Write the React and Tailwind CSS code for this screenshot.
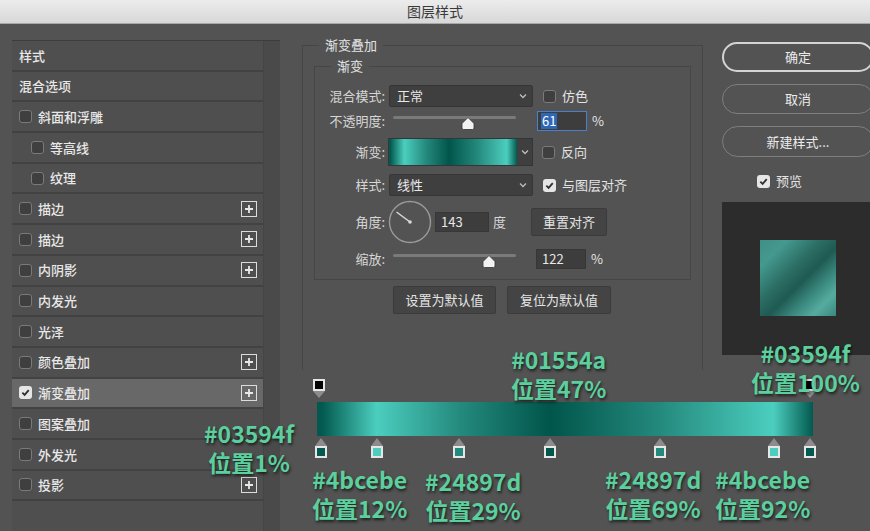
import React from 'react';

const layers = [
  { label: '样式' },
  { label: '混合选项' },
  { label: '斜面和浮雕', box: true },
  { label: '等高线', box: true, indent: true },
  { label: '纹理', box: true, indent: true },
  { label: '描边', box: true, plus: true },
  { label: '描边', box: true, plus: true },
  { label: '内阴影', box: true, plus: true },
  { label: '内发光', box: true },
  { label: '光泽', box: true },
  { label: '颜色叠加', box: true, plus: true },
  { label: '渐变叠加', box: true, plus: true, checked: true, active: true },
  { label: '图案叠加', box: true },
  { label: '外发光', box: true },
  { label: '投影', box: true, plus: true },
];

const grad =
  'linear-gradient(90deg, #03594f 1%, #4bcebe 12%, #24897d 29%, #01554a 47%, #24897d 69%, #4bcebe 92%, #03594f 100%)';

function Check({ checked }) {
  if (checked) {
    return (
      <span className="w-[13px] h-[13px] rounded-[3px] bg-[#e6e6e6] flex items-center justify-center shrink-0">
        <svg width="9" height="9" viewBox="0 0 10 10">
          <path d="M1.5 5.2 L4 7.6 L8.6 2.4" fill="none" stroke="#2f2f2f" strokeWidth="2" />
        </svg>
      </span>
    );
  }
  return <span className="w-[13px] h-[13px] rounded-[3px] border border-[#7a7a7a] bg-[#3f3f3f] shrink-0" />;
}

function Plus() {
  return (
    <span className="w-[16px] h-[16px] border-[1.5px] border-[#dcdcdc] flex items-center justify-center">
      <svg width="10" height="10" viewBox="0 0 10 10">
        <path d="M5 1 V9 M1 5 H9" stroke="#e8e8e8" strokeWidth="1.8" />
      </svg>
    </span>
  );
}

function Chevron() {
  return (
    <svg width="8" height="6" viewBox="0 0 8 6">
      <path d="M1 1.5 L4 4.5 L7 1.5" fill="none" stroke="#bdbdbd" strokeWidth="1.3" />
    </svg>
  );
}

function Select({ value }) {
  return (
    <div className="w-[144px] h-[22px] bg-[#3f3f3f] border border-[#363636] rounded-[2px] flex items-center justify-between pl-[7px] pr-[5px] text-[#e8e8e8]">
      <span>{value}</span>
      <Chevron />
    </div>
  );
}

function Thumb() {
  return (
    <svg width="14" height="13" viewBox="0 0 14 13">
      <path d="M7 0.5 L13 6.5 V11 Q13 12.5 11.5 12.5 H2.5 Q1 12.5 1 11 V6.5 Z" fill="#f2f2f2" stroke="#333" strokeWidth="0.8" />
    </svg>
  );
}

function Slider({ at }) {
  return (
    <div className="relative w-[123px] h-[20px] ml-[7px]">
      <div className="absolute left-0 right-0 top-[5px] h-[3px] bg-[#7a7a7a] rounded-full" />
      <div className="absolute top-[6px]" style={{ left: at - 7 }}>
        <Thumb />
      </div>
    </div>
  );
}

function Label({ children }) {
  return <div className="w-[71px] text-right pr-[1px] text-[#d6d6d6] shrink-0">{children}</div>;
}

function Stop({ x, color, top }) {
  if (top) {
    return (
      <div className="absolute top-0 flex flex-col items-center" style={{ left: x - 6 }}>
        <span className="w-[12px] h-[12px] border-2 border-[#e6e6e6] bg-black" />
        <svg width="12" height="7" viewBox="0 0 12 7">
          <path d="M0 0 H12 L6 7 Z" fill="#8c8c8c" />
        </svg>
      </div>
    );
  }
  return (
    <div className="absolute top-[59px] flex flex-col items-center" style={{ left: x - 6 }}>
      <svg width="12" height="8" viewBox="0 0 12 8">
        <path d="M0 8 H12 L6 0 Z" fill="#8c8c8c" />
      </svg>
      <span className="w-[12px] h-[12px] border-2 border-[#e6e6e6]" style={{ background: color }} />
    </div>
  );
}

function Note({ x, y, hex, pos }) {
  return (
    <div
      className="absolute text-center text-[23px] leading-[29px] font-bold text-[#5bd09e] font-['Noto_Sans_CJK_SC',sans-serif] [text-shadow:1px_2px_3px_rgba(0,0,0,0.65)] whitespace-nowrap"
      style={{ left: x, top: y }}
    >
      <div>{hex}</div>
      <div>{pos}</div>
    </div>
  );
}

export default function App() {
  return (
    <div className="w-[870px] h-[531px] relative overflow-hidden bg-[#535353] flex flex-col text-[13px] font-['Noto_Sans_CJK_SC','Noto_Sans',sans-serif]">
      <div className="h-[24px] shrink-0 bg-gradient-to-b from-[#ececec] to-[#d8d8d8] border-b border-[#a8a8a8] flex items-center justify-center text-[14px] text-[#3a3a3a]">
        图层样式
      </div>

      <div className="flex flex-1 min-h-0">
        {/* layer list */}
        <div className="pl-3 pt-4 h-full">
          <div className="w-[268px] h-full flex border-t border-[#3d3d3d]">
            <div className="w-[251px] bg-[#4f4f4f] flex flex-col">
              {layers.map((l, i) => (
                <div
                  key={i}
                  className={`h-[30.7px] shrink-0 border-b-2 border-[#424242] flex items-center pr-[6px] text-[#e8e8e8] font-medium ${
                    l.active ? 'bg-[#686868]' : ''
                  } ${l.indent ? 'pl-[19px]' : 'pl-[7px]'}`}
                >
                  {l.box && <Check checked={l.checked} />}
                  <span className={l.box ? 'ml-[6px]' : ''}>{l.label}</span>
                  <span className="flex-1" />
                  {l.plus && <Plus />}
                </div>
              ))}
            </div>
            <div className="w-[17px] bg-[#4a4a4a] border-l border-[#454545]" />
          </div>
        </div>

        {/* right side */}
        <div className="flex-1 flex flex-col">
          <div className="flex items-start pt-[12px]">
            <fieldset className="ml-[22px] w-[401px] h-[334px] shrink-0 border border-b-0 border-[#464646]">
              <legend className="ml-[16px] px-[6px] leading-[18px] text-[#e4e4e4]">渐变叠加</legend>
              <fieldset className="mx-[11px] mt-[3px] border border-[#464646] pb-[10px]">
                <legend className="ml-[16px] px-[6px] leading-[18px] text-[#e4e4e4]">渐变</legend>
                <div className="flex items-center h-[22px] mt-[10px]">
                  <Label>混合模式:</Label>
                  <div className="ml-[3px]">
                    <Select value="正常" />
                  </div>
                  <div className="ml-[10px] flex items-center gap-[6px] text-[#e4e4e4]">
                    <Check />
                    <span>仿色</span>
                  </div>
                </div>
                <div className="flex items-center h-[22px] mt-[3px]">
                  <Label>不透明度:</Label>
                  <Slider at={75} />
                  <div className="ml-[21px] w-[50px] h-[20px] border border-[#4a7fc9] bg-[#3d3d3d] flex items-center pl-[3px]">
                    <span className="bg-[#2d67b8] text-white px-[1px] leading-[16px]">61</span>
                  </div>
                  <span className="ml-[5px] text-[#e4e4e4]">%</span>
                </div>
                <div className="flex items-center h-[28px] mt-[6px]">
                  <Label>渐变:</Label>
                  <div className="ml-[2px] flex h-[28px] border border-[#353535]">
                    <div className="w-[128px] h-full" style={{ background: grad }} />
                    <div className="w-[15px] h-full bg-[#3f3f3f] flex items-center justify-center">
                      <Chevron />
                    </div>
                  </div>
                  <div className="ml-[9px] flex items-center gap-[6px] text-[#e4e4e4]">
                    <Check />
                    <span>反向</span>
                  </div>
                </div>
                <div className="flex items-center h-[22px] mt-[8px]">
                  <Label>样式:</Label>
                  <div className="ml-[3px]">
                    <Select value="线性" />
                  </div>
                  <div className="ml-[10px] flex items-center gap-[6px] text-[#e4e4e4]">
                    <Check checked />
                    <span>与图层对齐</span>
                  </div>
                </div>
                <div className="flex items-center h-[44px] mt-[4px]">
                  <Label>角度:</Label>
                  <svg width="44" height="44" viewBox="0 0 44 44" className="ml-[2px]">
                    <circle cx="22" cy="22" r="20.5" fill="none" stroke="#9a9a9a" strokeWidth="1.4" />
                    <path d="M22 22 L8.5 12" stroke="#d8d8d8" strokeWidth="1.5" />
                    <circle cx="22" cy="22" r="1.8" fill="#d8d8d8" />
                  </svg>
                  <div className="ml-[3px] w-[54px] h-[20px] bg-[#3d3d3d] border border-[#373737] text-[#e8e8e8] pl-[5px] leading-[18px]">
                    143
                  </div>
                  <span className="ml-[4px] text-[#d6d6d6]">度</span>
                  <div className="ml-[25px] w-[76px] h-[28px] bg-[#444444] border border-[#3b3b3b] rounded-[2px] flex items-center justify-center text-[#e4e4e4]">
                    重置对齐
                  </div>
                </div>
                <div className="flex items-center h-[20px] mt-[5px]">
                  <Label>缩放:</Label>
                  <Slider at={96} />
                  <div className="ml-[20px] w-[50px] h-[20px] bg-[#3d3d3d] border border-[#373737] text-[#e8e8e8] pl-[5px] leading-[18px]">
                    122
                  </div>
                  <span className="ml-[5px] text-[#e4e4e4]">%</span>
                </div>
              </fieldset>
              <div className="flex gap-[11px] ml-[90px] mt-[6px]">
                <div className="w-[103px] h-[28px] bg-[#444444] border border-[#3b3b3b] rounded-[2px] flex items-center justify-center text-[#e4e4e4]">
                  设置为默认值
                </div>
                <div className="w-[104px] h-[28px] bg-[#444444] border border-[#3b3b3b] rounded-[2px] flex items-center justify-center text-[#e4e4e4]">
                  复位为默认值
                </div>
              </div>
            </fieldset>

            <div className="ml-[19px] mt-[6px] w-[152px] shrink-0 flex flex-col">
              <div className="h-[30px] rounded-full border-2 border-[#d4d4d4] flex items-center justify-center text-[#ececec]">
                确定
              </div>
              <div className="h-[30px] mt-[12px] rounded-full border border-[#7e7e7e] flex items-center justify-center text-[#ececec]">
                取消
              </div>
              <div className="h-[31px] mt-[12px] rounded-full border border-[#7e7e7e] flex items-center justify-center text-[#ececec]">
                新建样式...
              </div>
              <div className="mt-[17px] h-[14px] flex items-center ml-[35px] gap-[6px] text-[#e4e4e4]">
                <Check checked />
                <span>预览</span>
              </div>
              <div className="mt-[14px] h-[153px] bg-[#2c2c2c] pt-[38px] pl-[38px]">
                <div
                  className="w-[76px] h-[76px]"
                  style={{
                    background:
                      'linear-gradient(135deg, #3f8f86 0%, #44998f 18%, #2c6e65 40%, #1f5a52 55%, #3d8d83 72%, #56ab9f 84%, #3a877d 100%)',
                  }}
                />
              </div>
            </div>
          </div>

          {/* gradient editor */}
          <div className="relative ml-[31px] mt-[9px] w-[510px] h-[82px]">
            <div className="ml-[6px] mt-[23px] w-[496px] h-[34px]" style={{ background: grad }} />
            <Stop x={8} top />
            <Stop x={499} top />
            <Stop x={10} color="#03594f" />
            <Stop x={66} color="#4bcebe" />
            <Stop x={148} color="#24897d" />
            <Stop x={239} color="#01554a" />
            <Stop x={349} color="#24897d" />
            <Stop x={463} color="#4bcebe" />
            <Stop x={499} color="#03594f" />
          </div>
        </div>
      </div>

      <Note x={511} y={345} hex="#01554a" pos="位置47%" />
      <Note x={751} y={339} hex="#03594f" pos="位置100%" />
      <Note x={204} y={419} hex="#03594f" pos="位置1%" />
      <Note x={312} y={465} hex="#4bcebe" pos="位置12%" />
      <Note x={425} y={467} hex="#24897d" pos="位置29%" />
      <Note x={605} y={465} hex="#24897d" pos="位置69%" />
      <Note x={715} y={465} hex="#4bcebe" pos="位置92%" />
    </div>
  );
}
